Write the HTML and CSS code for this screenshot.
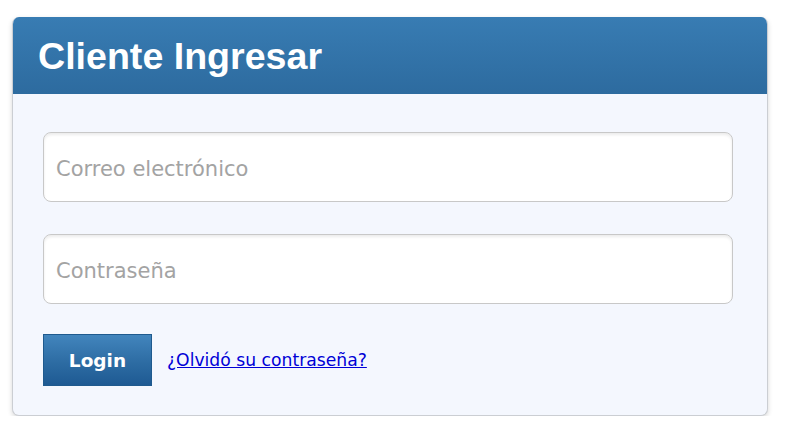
FILE: index.html
```html
<!DOCTYPE html>
<html lang="es">
<head>
<meta charset="utf-8">
<title>Cliente Ingresar</title>
<link rel="stylesheet" href="styles.css">
</head>
<body>
<div class="card">
  <div class="card-header">
    <h1 class="title">Cliente Ingresar</h1>
  </div>
  <form class="card-body">
    <input class="field" type="email" placeholder="Correo electrónico">
    <input class="field" type="password" placeholder="Contraseña">
    <div class="actions">
      <button class="btn" type="button">Login</button>
      <a class="forgot" href="#">¿Olvidó su contraseña?</a>
    </div>
  </form>
</div>
</body>
</html>
```

FILE: styles.css
```css
html, body {
  margin: 0;
  padding: 0;
  background: #ffffff;
}

body {
  padding: 17px 0 0 12px;
  font-family: "DejaVu Sans", Verdana, sans-serif;
}

.card {
  width: 756px;
  box-sizing: border-box;
  border: 1px solid #cbced3;
  border-top: none;
  border-radius: 7px;
  background: #f4f7fe;
  box-shadow: 0 2px 5px rgba(0, 0, 0, 0.16);
  overflow: hidden;
}

.card-header {
  height: 77px;
  display: flex;
  align-items: center;
  padding-left: 26px;
  background: linear-gradient(to bottom, #387cb3 0%, #2d6b9f 100%);
  margin: 0 -1px;
}

.title {
  margin: 0;
  color: #ffffff;
  font-family: "Liberation Sans", Arial, Helvetica, sans-serif;
  font-weight: bold;
  font-size: 37.6px;
  line-height: 1;
  padding-top: 3px;
}

.card-body {
  display: flex;
  flex-direction: column;
  padding: 38px 0 29px 30px;
  margin: 0;
}

.field {
  width: 690px;
  height: 70px;
  box-sizing: border-box;
  border: 1px solid #c8c8c8;
  border-radius: 8px;
  background: #ffffff;
  box-shadow: inset 0 2px 3px rgba(0, 0, 0, 0.08);
  padding: 3px 12px 0 12px;
  font-family: "DejaVu Sans", Verdana, sans-serif;
  font-size: 21px;
  color: #333;
  margin: 0 0 32px 0;
  outline: none;
}

.field::placeholder {
  color: #a3a3a3;
}

.field + .field {
  margin-bottom: 30px;
}

.actions {
  display: flex;
  align-items: center;
  gap: 15px;
}

.btn {
  width: 109px;
  height: 52px;
  border: 1px solid #1f5a8e;
  border-radius: 0;
  background: linear-gradient(to bottom, #4285bd 0%, #2d6ca3 55%, #1e5a93 100%);
  color: #ffffff;
  font-family: "DejaVu Sans", Verdana, sans-serif;
  font-weight: bold;
  font-size: 18.5px;
  padding: 0;
  cursor: pointer;
}

.forgot {
  color: #0000d6;
  text-decoration: underline;
  font-family: "DejaVu Sans", Verdana, sans-serif;
  font-size: 17.2px;
}
```
